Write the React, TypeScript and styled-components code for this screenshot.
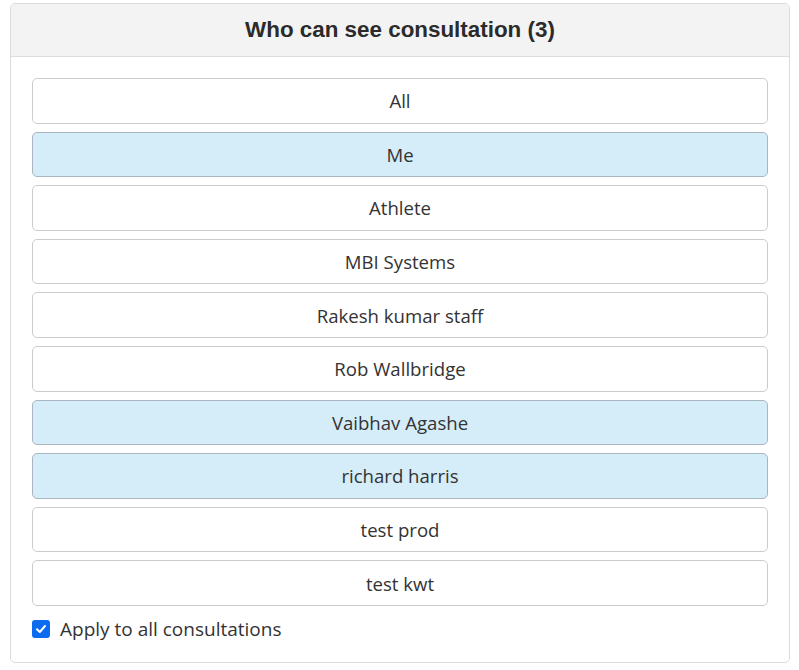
import React, { useState } from "react";
import styled, { createGlobalStyle } from "styled-components";

const Global = createGlobalStyle`
  html, body { margin: 0; padding: 0; background: #fff; }
  body { font-family: "Open Sans", "Noto Sans", sans-serif; }
`;

const Page = styled.div`
  padding: 3px 9px 0 10px;
`;

const Panel = styled.div`
  border: 1px solid #dcdcdc;
  border-radius: 5px;
  background: #fff;
  overflow: hidden;
`;

const Header = styled.div`
  background: #f3f3f3;
  border-bottom: 1px solid #dcdcdc;
  height: 52px;
  display: flex;
  align-items: center;
  justify-content: center;
  font-family: "Liberation Sans", Arial, sans-serif;
  font-weight: bold;
  font-size: 22.4px;
  color: #2b2b2b;
`;

const Body = styled.div`
  padding: 21px 21px 20px 21px;
  display: flex;
  flex-direction: column;
`;

const List = styled.div`
  display: flex;
  flex-direction: column;
  gap: 8px;
`;

const Row = styled.button<{ $selected: boolean }>`
  height: 45.6px;
  box-sizing: border-box;
  width: 100%;
  border: 1px solid ${(p) => (p.$selected ? "#aab6bf" : "#cccccc")};
  background: ${(p) => (p.$selected ? "#d5ecf9" : "#ffffff")};
  border-radius: 5px;
  font-family: "Open Sans", "Noto Sans", sans-serif;
  font-size: 18.6px;
  color: #333;
  display: flex;
  align-items: center;
  justify-content: center;
  padding: 0;
  cursor: pointer;
`;

const CheckRow = styled.label`
  display: flex;
  align-items: center;
  gap: 10px;
  margin-top: 10px;
  font-size: 19px;
  color: #333;
  cursor: pointer;
`;

const Box = styled.span`
  width: 18px;
  height: 18px;
  border-radius: 3px;
  background: #0b6cf0;
  display: inline-flex;
  align-items: center;
  justify-content: center;
`;

const items = [
  "All",
  "Me",
  "Athlete",
  "MBI Systems",
  "Rakesh kumar staff",
  "Rob Wallbridge",
  "Vaibhav Agashe",
  "richard harris",
  "test prod",
  "test kwt",
];

export default function App() {
  const [sel] = useState<string[]>(["Me", "Vaibhav Agashe", "richard harris"]);
  return (
    <Page>
      <Global />
      <Panel>
        <Header>Who can see consultation ({sel.length})</Header>
        <Body>
          <List>
            {items.map((it) => (
              <Row key={it} $selected={sel.includes(it)}>
                {it}
              </Row>
            ))}
          </List>
          <CheckRow>
            <Box>
              <svg width="12" height="12" viewBox="0 0 12 12">
                <path d="M2 6.2 L4.8 9 L10 3" fill="none" stroke="#fff" strokeWidth="2" strokeLinecap="round" strokeLinejoin="round" />
              </svg>
            </Box>
            Apply to all consultations
          </CheckRow>
        </Body>
      </Panel>
    </Page>
  );
}
